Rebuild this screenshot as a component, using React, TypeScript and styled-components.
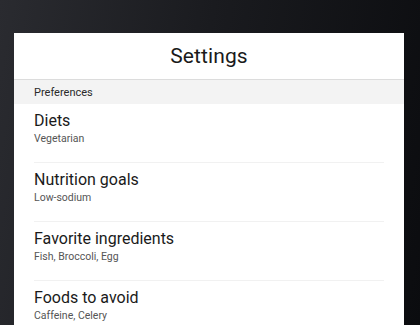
import React from "react";
import styled, { createGlobalStyle } from "styled-components";

const Global = createGlobalStyle`
  html, body {
    margin: 0;
    padding: 0;
    height: 100%;
  }
  body {
    background: linear-gradient(100deg, #2a2b30 0%, #1a1b1f 45%, #0b0c0f 100%);
    font-family: Roboto, "Noto Sans", "Liberation Sans", sans-serif;
    overflow: hidden;
  }
`;

const Stage = styled.div`
  height: 325px;
  padding: 33px 16px 0 14px;
  box-sizing: border-box;
  display: flex;
`;

const Panel = styled.div`
  flex: 1;
  background: #ffffff;
  display: flex;
  flex-direction: column;
  overflow: hidden;
`;

const Header = styled.header`
  flex-shrink: 0;
  height: 46px;
  display: flex;
  align-items: center;
  justify-content: center;
  border-bottom: 1px solid #dcdcdc;
  font-size: 21px;
  color: #1a1a1a;
  letter-spacing: 0.1px;
`;

const SectionBar = styled.div`
  flex-shrink: 0;
  height: 24px;
  background: #f3f3f3;
  display: flex;
  align-items: center;
  padding-left: 20px;
  font-size: 11px;
  color: #2a2a2a;
`;

const List = styled.div`
  flex-shrink: 0;
  display: flex;
  flex-direction: column;
  padding: 0 20px;
`;

const Item = styled.div<{ $last?: boolean }>`
  flex-shrink: 0;
  padding: 7px 0 16px;
  border-bottom: 1px solid ${(p) => (p.$last ? "transparent" : "#f1f1f1")};
  display: flex;
  flex-direction: column;
`;

const Title = styled.div`
  font-size: 16px;
  line-height: 20px;
  color: #1a1a1a;
`;

const Subtitle = styled.div`
  margin-top: 1px;
  font-size: 10.5px;
  line-height: 14px;
  color: #555;
`;

const items = [
  { title: "Diets", sub: "Vegetarian" },
  { title: "Nutrition goals", sub: "Low-sodium" },
  { title: "Favorite ingredients", sub: "Fish, Broccoli, Egg" },
  { title: "Foods to avoid", sub: "Caffeine, Celery" },
];

export default function App() {
  return (
    <>
      <Global />
      <Stage>
        <Panel>
          <Header>Settings</Header>
          <SectionBar>Preferences</SectionBar>
          <List>
            {items.map((it, i) => (
              <Item key={it.title} $last={i === items.length - 1}>
                <Title>{it.title}</Title>
                <Subtitle>{it.sub}</Subtitle>
              </Item>
            ))}
          </List>
        </Panel>
      </Stage>
    </>
  );
}
